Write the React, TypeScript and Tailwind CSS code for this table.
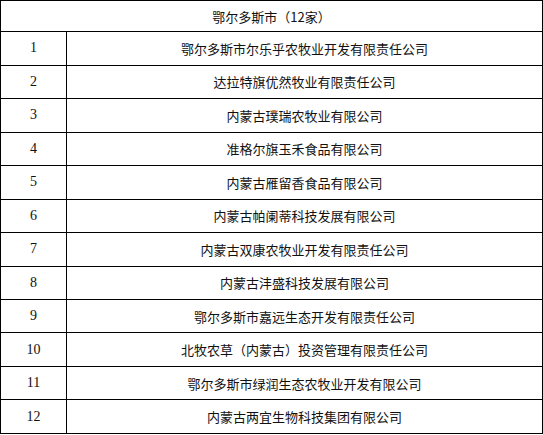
const companies = [
  '鄂尔多斯市尔乐乎农牧业开发有限责任公司',
  '达拉特旗优然牧业有限责任公司',
  '内蒙古璞瑞农牧业有限公司',
  '准格尔旗玉禾食品有限公司',
  '内蒙古雁留香食品有限公司',
  '内蒙古帕阑蒂科技发展有限公司',
  '内蒙古双康农牧业开发有限责任公司',
  '内蒙古沣盛科技发展有限公司',
  '鄂尔多斯市嘉远生态开发有限责任公司',
  '北牧农草（内蒙古）投资管理有限责任公司',
  '鄂尔多斯市绿润生态农牧业开发有限公司',
  '内蒙古两宜生物科技集团有限公司',
];

export default function App() {
  return (
    <div className="w-[543px] h-[435px] bg-white">
      <table
        className="w-[543px] h-[434px] border-collapse table-fixed text-[13px] text-[#111]"
        style={{ fontFamily: '"Noto Sans CJK SC", "Liberation Sans", sans-serif' }}
      >
        <colgroup>
          <col className="w-[66px]" />
          <col />
        </colgroup>
        <tbody>
          <tr>
            <td colSpan={2} className="border border-black text-center p-0 leading-none">
              鄂尔多斯市（12家）
            </td>
          </tr>
          {companies.map((name, i) => (
            <tr key={i}>
              <td
                className="border border-black text-center p-0 leading-none text-[14px]"
                style={{ fontFamily: '"Liberation Serif", serif' }}
              >
                {i + 1}
              </td>
              <td className="border border-black text-center p-0 leading-none">{name}</td>
            </tr>
          ))}
        </tbody>
      </table>
    </div>
  );
}
